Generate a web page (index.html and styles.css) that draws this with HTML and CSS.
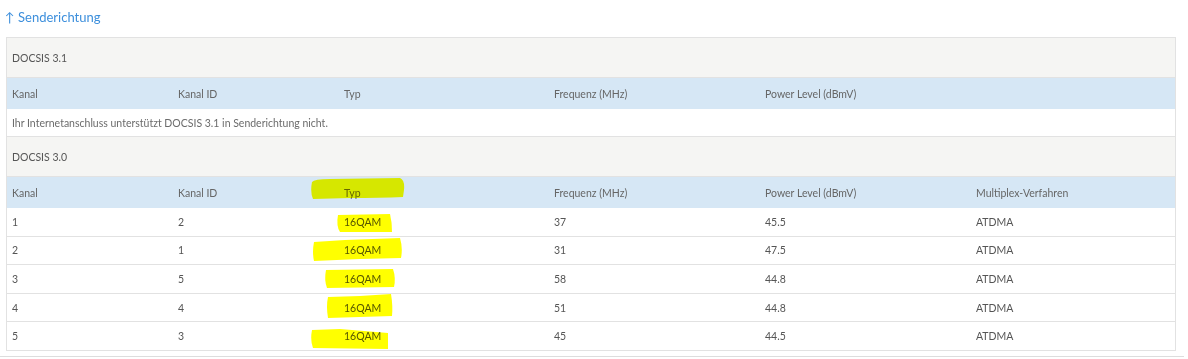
FILE: index.html
```html
<!DOCTYPE html>
<html lang="de">
<head>
<meta charset="utf-8">
<link rel="stylesheet" href="styles.css">
</head>
<body>
<div class="page">
  <div class="title"><span class="arrow">↑</span> Senderichtung</div>
  <div class="table">
    <div class="section">DOCSIS 3.1</div>
    <div class="row head">
      <div>Kanal</div><div>Kanal ID</div><div>Typ</div><div>Frequenz (MHz)</div><div>Power Level (dBmV)</div><div></div>
    </div>
    <div class="row msg">Ihr Internetanschluss unterstützt DOCSIS 3.1 in Senderichtung nicht.</div>
    <div class="section">DOCSIS 3.0</div>
    <div class="row head">
      <div>Kanal</div><div>Kanal ID</div><div>Typ</div><div>Frequenz (MHz)</div><div>Power Level (dBmV)</div><div>Multiplex-Verfahren</div>
    </div>
    <div class="row data"><div>1</div><div>2</div><div>16QAM</div><div>37</div><div>45.5</div><div>ATDMA</div></div>
    <div class="row data"><div>2</div><div>1</div><div>16QAM</div><div>31</div><div>47.5</div><div>ATDMA</div></div>
    <div class="row data"><div>3</div><div>5</div><div>16QAM</div><div>58</div><div>44.8</div><div>ATDMA</div></div>
    <div class="row data"><div>4</div><div>4</div><div>16QAM</div><div>51</div><div>44.8</div><div>ATDMA</div></div>
    <div class="row data"><div>5</div><div>3</div><div>16QAM</div><div>45</div><div>44.5</div><div>ATDMA</div></div>
  </div>
  <div class="rule"></div>
  <svg class="marks" width="1188" height="359" viewBox="0 0 1188 359">
    <path d="M312 182 Q314 179 330 179 L400 178 Q405 180 404 190 L403 197 Q380 198 350 198 L313 199 Q310 192 312 182 Z"/>
    <path d="M338 215 L390 214 Q392 222 392 232 L340 232 Q336 226 338 215 Z"/>
    <path d="M314 242 L345 240 L400 238 Q403 248 401 258 L360 259 L314 261 Q312 252 314 242 Z"/>
    <path d="M326 270 L393 269 Q396 278 394 287 L327 288 Q324 280 326 270 Z"/>
    <path d="M328 297 L360 296 L391 294 Q393 306 392 316 L328 318 Q326 306 328 297 Z"/>
    <path d="M312 330 L340 329 L388 333 L388 349 L313 348 Q310 340 312 330 Z"/>
  </svg>
</div>
</body>
</html>
```

FILE: styles.css
```css
html, body {
  margin: 0;
  padding: 0;
  background: #ffffff;
}

.page {
  position: relative;
  width: 1188px;
  height: 359px;
  font-family: "Lato", "Liberation Sans", sans-serif;
  font-size: 10.5px;
  color: #555555;
}

.title {
  padding: 8px 0 0 5px;
  height: 37px;
  box-sizing: border-box;
  font-size: 13px;
  color: #3d8fdc;
  line-height: 18px;
}

.table {
  margin-left: 6px;
  width: 1168px;
  border: 1px solid #e2e2e2;
  border-bottom: 0;
}

.section {
  height: 39px;
  background: #f5f5f3;
  padding-left: 5px;
  display: flex;
  align-items: center;
  border-bottom: 1px solid #e2e2e2;
  color: #555555;
}

.row {
  display: grid;
  grid-template-columns: 166px 166px 210px 211px 211px 1fr;
  align-items: center;
}

.row > div {
  padding-left: 5px;
}

.head {
  height: 31px;
  background: #d6e7f5;
  color: #666666;
}

.msg {
  display: flex;
  height: 27px;
  padding-left: 5px;
  border-bottom: 1px solid #e2e2e2;
  color: #6b6b6b;
}

.data {
  height: 27.6px;
  border-bottom: 1px solid #e2e2e2;
  color: #555555;
}

.rule {
  margin-top: 5px;
  height: 1px;
  background: #dddddd;
  width: 1184px;
}

.marks {
  position: absolute;
  left: 0;
  top: 0;
  mix-blend-mode: multiply;
  pointer-events: none;
}

.marks path {
  fill: #ffff00;
}
```
